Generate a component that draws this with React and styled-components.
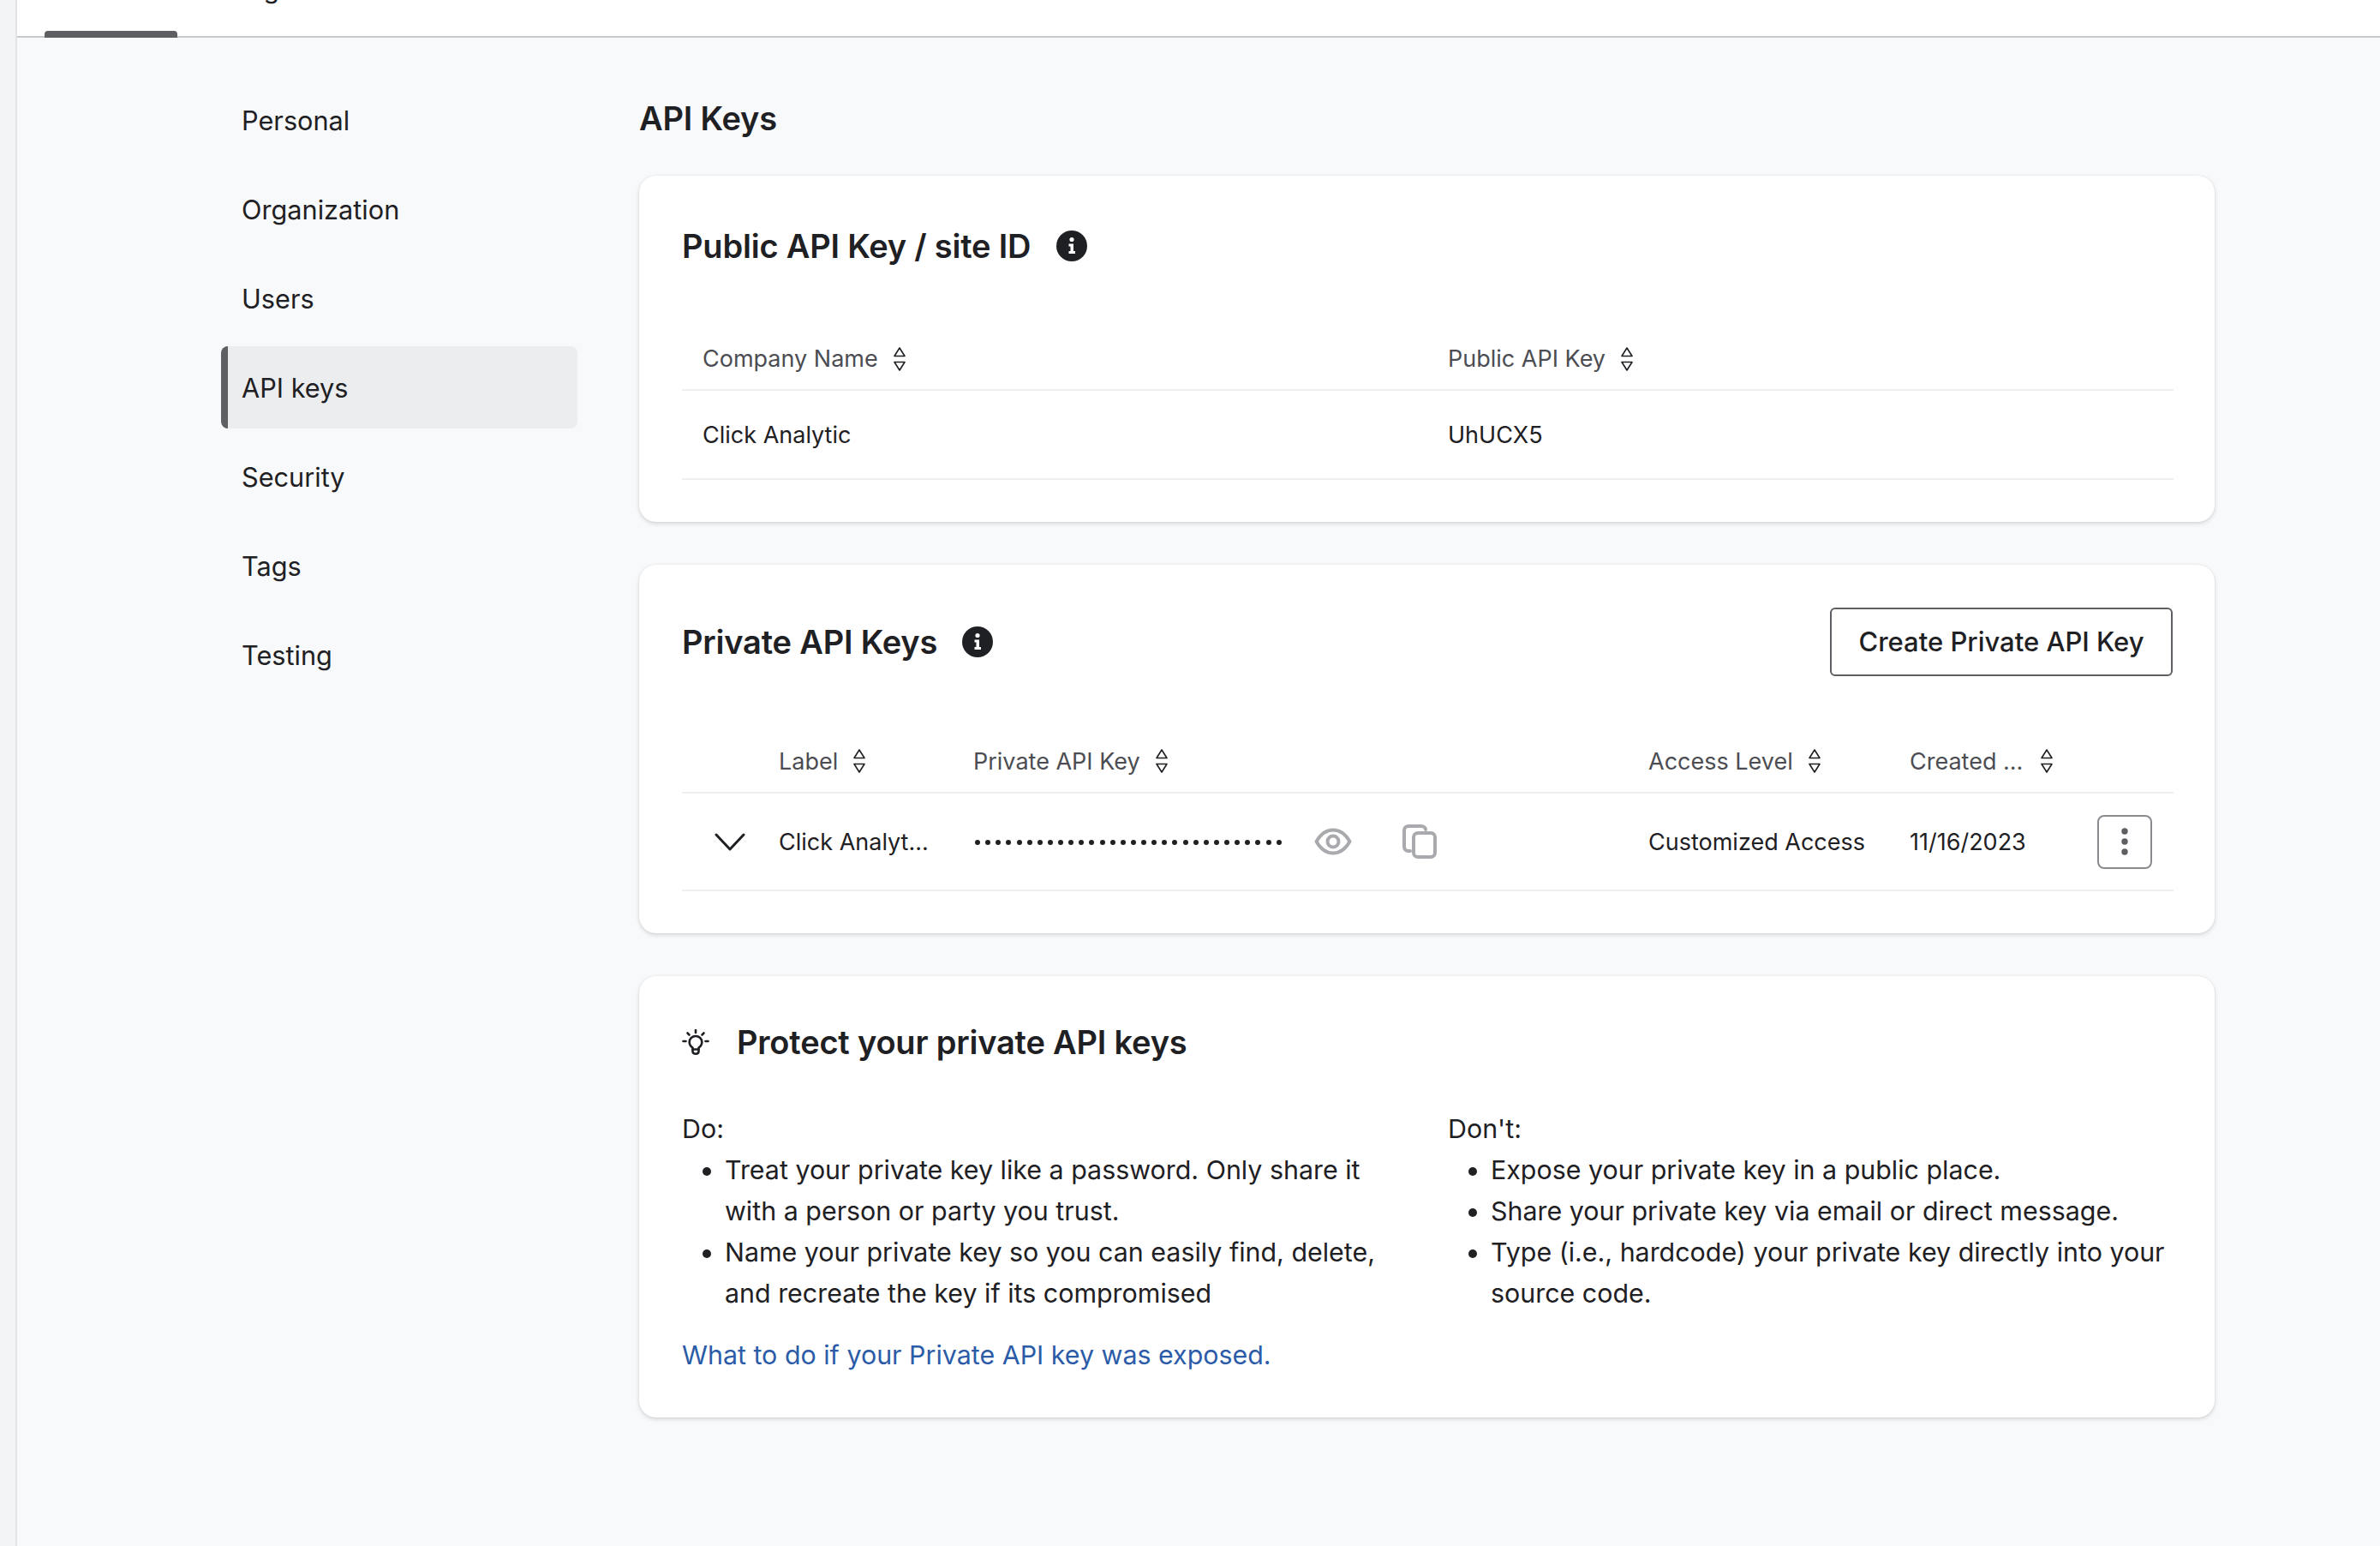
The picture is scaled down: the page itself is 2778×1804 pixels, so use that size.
import React from 'react';
import styled, { createGlobalStyle } from 'styled-components';

const GlobalStyle = createGlobalStyle`
  * { box-sizing: border-box; }
  html, body { margin: 0; padding: 0; background: #f8f9fa; }
  body {
    font-family: Inter, "Liberation Sans", sans-serif;
    color: #1e2023;
    -webkit-font-smoothing: antialiased;
  }
`;

const Shell = styled.div`
  display: flex;
  min-height: 1804px;
`;

const Rail = styled.div`
  flex: 0 0 20px;
  background: #f3f4f6;
  border-right: 2px solid #e2e3e6;
`;

const Main = styled.div`
  flex: 1;
  min-width: 0;
`;

const TopBar = styled.div`
  display: flex;
  height: 44px;
  overflow: hidden;
  padding-left: 32px;
  background: #fff;
  box-shadow: inset 0 -2px 0 #c8cacd;
`;

const Tab = styled.div`
  position: relative;
  flex: 0 0 auto;
  width: ${p => p.$w}px;
  padding-left: ${p => p.$pad || 0}px;
  text-align: ${p => (p.$active ? 'center' : 'left')};
  font-size: 30px;
  line-height: 36px;
  color: #1e2023;

  span {
    display: block;
    margin-top: -31px;
  }

  ${p => p.$active && `
    &::after {
      content: '';
      position: absolute;
      left: 0;
      right: 0;
      bottom: 0;
      height: 8px;
      background: #5e5f63;
      border-radius: 4px 4px 0 0;
    }
  `}
`;

const Body = styled.div`
  display: flex;
  align-items: flex-start;
`;

const Side = styled.nav`
  flex: 0 0 416px;
  margin-left: 238px;
  margin-top: 48px;
  display: flex;
  flex-direction: column;
  gap: 8px;
`;

const SideItem = styled.div`
  height: 96px;
  display: flex;
  align-items: center;
  padding-left: ${p => (p.$active ? '16px' : '24px')};
  font-size: 30.7px;
  border-radius: 8px;
  background: ${p => (p.$active ? '#ecedef' : 'transparent')};
  border-left: ${p => (p.$active ? '8px solid #5e5f63' : 'none')};
`;

const Content = styled.main`
  flex: 0 0 1839px;
  margin-left: 72px;
`;

const PageTitle = styled.h1`
  margin: 0;
  padding-top: 69px;
  height: 161px;
  font-size: 38px;
  line-height: 50px;
  font-weight: 600;
  letter-spacing: -0.2px;
`;

const Card = styled.section`
  background: #fff;
  border-radius: 20px;
  box-shadow: 0 2px 5px rgba(30, 32, 35, 0.16), 0 0 2px rgba(30, 32, 35, 0.08);
  padding: 0 48px 0 50px;
  height: ${p => p.$h}px;
  margin-bottom: 50px;
`;

const CardHead = styled.div`
  display: flex;
  align-items: center;
  justify-content: space-between;
  height: ${p => p.$h}px;
`;

const TitleGroup = styled.div`
  display: flex;
  align-items: center;
  gap: ${p => p.$gap}px;
`;

const CardTitle = styled.h2`
  margin: 0;
  font-size: 38px;
  line-height: 50px;
  font-weight: 600;
  letter-spacing: -0.2px;
`;

const OutlineButton = styled.button`
  width: 400px;
  height: 80px;
  margin-right: 1px;
  background: #fff;
  border: 2px solid #5e5f63;
  border-radius: 6px;
  font-family: inherit;
  font-size: 31px;
  font-weight: 500;
  color: #1e2023;
`;

const TableRow = styled.div`
  display: grid;
  grid-template-columns: ${p => p.$cols};
  align-items: center;
  height: ${p => p.$h}px;
  padding-top: ${p => p.$top || 0}px;
  border-bottom: 2px solid #eeeff0;
`;

const HeadCell = styled.div`
  display: flex;
  align-items: center;
  gap: ${p => p.$gap || 18}px;
  padding-left: ${p => p.$pad || 0}px;
  font-size: 27px;
  color: #4b4d52;
  white-space: nowrap;
`;

const Cell = styled.div`
  display: flex;
  align-items: center;
  justify-content: ${p => (p.$between ? 'space-between' : 'flex-start')};
  padding-left: ${p => p.$pad || 0}px;
  padding-right: ${p => (p.$between ? '25px' : '0')};
  font-size: 27px;
  color: #1e2023;
  white-space: nowrap;
`;

const KeyDots = styled.div`
  display: flex;
  gap: 6.14px;
  width: 358px;
  margin: 2px 38px 0 2px;

  i {
    width: 6px;
    height: 6px;
    border-radius: 50%;
    background: #1e2023;
  }
`;

const KeyActions = styled.div`
  display: flex;
  align-items: center;
  gap: 59px;
`;

const MenuButton = styled.button`
  width: 64px;
  height: 63px;
  padding: 0;
  display: flex;
  align-items: center;
  justify-content: center;
  background: #fff;
  border: 2px solid #8a8b8f;
  border-radius: 8px;
`;

const Columns = styled.div`
  display: grid;
  grid-template-columns: 894px 1fr;
`;

const ListColumn = styled.div`
  padding-right: ${p => p.$right || 0}px;
`;

const Text = styled.div`
  font-size: 30.4px;
  line-height: 48px;
`;

const Bullets = styled.ul`
  margin: 0;
  padding: 0 0 0 50px;
  font-size: 30.4px;
  line-height: 48px;
`;

const HelpLink = styled.a`
  display: block;
  margin-top: 24px;
  font-size: 30.4px;
  line-height: 48px;
  color: #2c5ca8;
  text-decoration: none;
`;

function SortIcon() {
  return (
    <svg width="14" height="28" viewBox="0 0 14 28" fill="none" stroke="#1e2023" strokeWidth="1.6" strokeLinejoin="round">
      <path d="M7 1 L13 10.5 H1 Z" />
      <path d="M1 17.5 H13 L7 27 Z" />
    </svg>
  );
}

function InfoIcon() {
  return (
    <svg width="36" height="36" viewBox="0 0 36 36">
      <circle cx="18" cy="18" r="18" fill="#1e2023" />
      <circle cx="18" cy="10.5" r="2.6" fill="#fff" />
      <path d="M14.5 15.5 H20 V24 H22 V27 H14.5 V24 H16.5 V18.5 H14.5 Z" fill="#fff" />
    </svg>
  );
}

function Chevron() {
  return (
    <svg width="36" height="24" viewBox="0 0 36 24" fill="none" stroke="#1e2023" strokeWidth="3" strokeLinecap="round" strokeLinejoin="round">
      <path d="M2 4 L18 21 L34 4" />
    </svg>
  );
}

function EyeIcon() {
  return (
    <svg width="44" height="32" viewBox="0 0 44 32" fill="none" stroke="#a9aaad" strokeWidth="4">
      <path d="M2.5 16 C8 6.5 14.5 2.5 22 2.5 C29.5 2.5 36 6.5 41.5 16 C36 25.5 29.5 29.5 22 29.5 C14.5 29.5 8 25.5 2.5 16 Z" strokeLinejoin="round" />
      <circle cx="22" cy="16" r="6.5" />
    </svg>
  );
}

function CopyIcon() {
  return (
    <svg width="40" height="40" viewBox="0 0 40 40" fill="none" stroke="#a9aaad" strokeWidth="4">
      <rect x="13" y="10" width="25" height="28" rx="5" />
      <path d="M9 31 H7 C4 31 2 29 2 26 V7 C2 4 4 2 7 2 H22 C25 2 27 4 27 6" strokeLinecap="round" />
    </svg>
  );
}

function KebabIcon() {
  return (
    <svg width="10" height="32" viewBox="0 0 10 32" fill="#5e5f63">
      <circle cx="5" cy="4" r="3.7" />
      <circle cx="5" cy="16" r="3.7" />
      <circle cx="5" cy="28" r="3.7" />
    </svg>
  );
}

function BulbIcon() {
  return (
    <svg width="32" height="30" viewBox="0 0 32 30" fill="none" stroke="#1e2023" strokeWidth="2.6" strokeLinecap="round" strokeLinejoin="round">
      <path d="M16 1 V4" />
      <path d="M6.5 4.5 L8.5 6.5" />
      <path d="M25.5 4.5 L23.5 6.5" />
      <path d="M1.5 14 H4.5" />
      <path d="M27.5 14 H30.5" />
      <path d="M12.5 21.5 C10 20 8.7 17.6 8.7 15 C8.7 11 12 8 16 8 C20 8 23.3 11 23.3 15 C23.3 17.6 22 20 19.5 21.5 V26 C19.5 27.6 18 28.7 16 28.7 C14 28.7 12.5 27.6 12.5 26 Z" />
      <path d="M12.5 23.5 H19.5" />
    </svg>
  );
}

const navItems = ['Personal', 'Organization', 'Users', 'API keys', 'Security', 'Tags', 'Testing'];
const publicCols = '894px 1fr';
const privateCols = '113px 227px 788px 305px 1fr';

export default function App() {
  return (
    <Shell>
      <GlobalStyle />
      <Rail />
      <Main>
        <TopBar>
          <Tab $w={155} $active><span>Account</span></Tab>
          <Tab $w={218} $pad={34}><span>Billing</span></Tab>
          <Tab $w={215}><span>Email</span></Tab>
          <Tab $w={80}><span>SMS</span></Tab>
          <Tab $w={230}><span>Contacts</span></Tab>
          <Tab $w={180}><span>Other</span></Tab>
        </TopBar>
        <Body>
          <Side>
            {navItems.map(item => (
              <SideItem key={item} $active={item === 'API keys'}>{item}</SideItem>
            ))}
          </Side>
          <Content>
            <PageTitle>API Keys</PageTitle>

            <Card $h={404}>
              <CardHead $h={164}>
                <TitleGroup $gap={30}>
                  <CardTitle>Public API Key / site ID</CardTitle>
                  <InfoIcon />
                </TitleGroup>
              </CardHead>
              <TableRow $cols={publicCols} $h={87} $top={14}>
                <HeadCell $pad={24}>Company Name <SortIcon /></HeadCell>
                <HeadCell>Public API Key <SortIcon /></HeadCell>
              </TableRow>
              <TableRow $cols={publicCols} $h={104}>
                <Cell $pad={24}>Click Analytic</Cell>
                <Cell>UhUCX5</Cell>
              </TableRow>
            </Card>

            <Card $h={430}>
              <CardHead $h={179}>
                <TitleGroup $gap={29}>
                  <CardTitle>Private API Keys</CardTitle>
                  <InfoIcon />
                </TitleGroup>
                <OutlineButton>Create Private API Key</OutlineButton>
              </CardHead>
              <TableRow $cols={privateCols} $h={88} $top={14}>
                <HeadCell />
                <HeadCell>Label <SortIcon /></HeadCell>
                <HeadCell>Private API Key <SortIcon /></HeadCell>
                <HeadCell>Access Level <SortIcon /></HeadCell>
                <HeadCell $gap={21}>Created ... <SortIcon /></HeadCell>
              </TableRow>
              <TableRow $cols={privateCols} $h={114}>
                <Cell $pad={38}><Chevron /></Cell>
                <Cell>Click Analyt...</Cell>
                <Cell>
                  <KeyDots>
                    {Array.from({ length: 30 }, (_, i) => <i key={i} />)}
                  </KeyDots>
                  <KeyActions>
                    <EyeIcon />
                    <CopyIcon />
                  </KeyActions>
                </Cell>
                <Cell>Customized Access</Cell>
                <Cell $between>
                  11/16/2023
                  <MenuButton><KebabIcon /></MenuButton>
                </Cell>
              </TableRow>
            </Card>

            <Card $h={515}>
              <CardHead $h={154}>
                <TitleGroup $gap={32}>
                  <BulbIcon />
                  <CardTitle>Protect your private API keys</CardTitle>
                </TitleGroup>
              </CardHead>
              <Columns>
                <ListColumn $right={60}>
                  <Text>Do:</Text>
                  <Bullets>
                    <li>Treat your private key like a password. Only share it with a person or party you trust.</li>
                    <li>Name your private key so you can easily find, delete, and recreate the key if its compromised</li>
                  </Bullets>
                </ListColumn>
                <ListColumn>
                  <Text>Don't:</Text>
                  <Bullets>
                    <li>Expose your private key in a public place.</li>
                    <li>Share your private key via email or direct message.</li>
                    <li>Type (i.e., hardcode) your private key directly into your source code.</li>
                  </Bullets>
                </ListColumn>
              </Columns>
              <HelpLink href="#">What to do if your Private API key was exposed.</HelpLink>
            </Card>
          </Content>
        </Body>
      </Main>
    </Shell>
  );
}
